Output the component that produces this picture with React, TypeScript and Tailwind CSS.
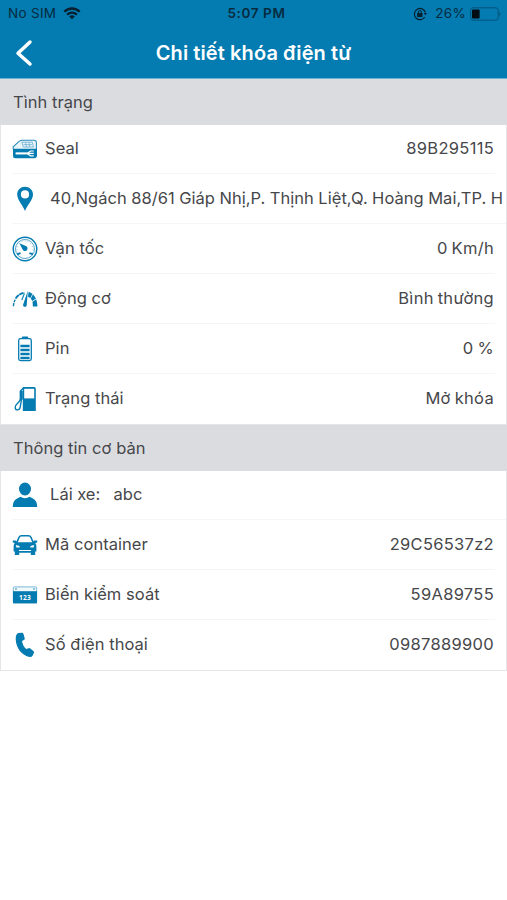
import type {ReactNode} from 'react';

type RowItem = {
    icon: ReactNode;
    label: string;
    value?: string;
    indent?: boolean;
};

const BLUE = '#047bb1';

function SealIcon() {
    return (
        <svg viewBox="0 0 26 26" className="w-[26px] h-[26px]" fill="none">
            <path d="M1.2 13.5V10.8L7.4 5.2Q8.6 4.2 10.2 4.2H22Q24.4 4.2 24.4 6.6V13.5" fill="#eaf5fa" stroke="#2c8dbe" strokeWidth="1.1"/>
            <path d="M9.8 6.2H20.3L21.5 11H11.3Z" stroke="#6fb3d5" strokeWidth=".9"/>
            <path d="M11.5 8.6H20M13.5 6.4L14.5 11M17 6.4L17.6 11" stroke="#6fb3d5" strokeWidth=".8"/>
            <path d="M1 12.8H25V19.2Q25 22.2 22 22.2H3.5Q1 22.2 1 19.7Z" fill={BLUE}/>
            <path d="M3.6 17.4H15.5" stroke="#fff" strokeWidth="2.1"/>
            <path d="M21.8 15H18.6L15 17.4L18.6 19.8H21.8M15 17.4H21.8" stroke="#fff" strokeWidth="1.2"/>
        </svg>
    );
}

function PinIcon() {
    return (
        <svg viewBox="0 0 26 26" className="w-[26px] h-[26px]">
            <path fillRule="evenodd" fill={BLUE}
                  d="M13 .8C8.6 .8 5.2 4 5.2 8.4C5.2 13.6 10.2 18 13 25C15.8 18 21 13.6 21 8.4C21 4 17.4 .8 13 .8ZM13 4.3A4.1 4.1 0 1 1 13 12.5A4.1 4.1 0 0 1 13 4.3Z"/>
        </svg>
    );
}

function SpeedIcon() {
    return (
        <svg viewBox="0 0 26 26" className="w-[26px] h-[26px]" fill="none">
            <circle cx="13" cy="13" r="11.8" stroke={BLUE} strokeWidth="1.4"/>
            <circle cx="13" cy="13" r="9.5" stroke="#3f97c3" strokeWidth=".9"/>
            <path d="M6 17A8 8 0 1 1 20 17" stroke="#9bcbe2" strokeWidth="1.1" strokeDasharray=".8 2.4"/>
            <path d="M5 18.3L8.6 17.2M21 18.3L17.4 17.2" stroke={BLUE} strokeWidth="1.8"/>
            <path d="M7.4 7.2L14.4 10.3A2.6 2.6 0 1 1 10.6 13.6Z" fill={BLUE}/>
        </svg>
    );
}

function EngineIcon() {
    return (
        <svg viewBox="0 0 26 26" className="w-[26px] h-[26px]" fill="none">
            <path d="M1.4 20.2C1.6 17.5 2.2 15.6 3.2 13.6" stroke={BLUE} strokeWidth="1.3" strokeDasharray="3 .8"/>
            <path d="M3.6 12.6C5.3 9.6 8 7.6 12.6 6.7" stroke={BLUE} strokeWidth="1.9" strokeDasharray="4.8 .6"/>
            <path d="M15.8 4.8L11 19A1.9 1.9 0 0 0 14.7 19.6Z" fill={BLUE}/>
            <path d="M12.4 7.6L9.8 14" stroke={BLUE} strokeWidth="1.1"/>
            <path d="M16.6 5.8L20.5 7.7L18.4 12L16 10.8Z" fill={BLUE}/>
            <path d="M21 8.2L24 12.6L20.3 15.1L18.8 12.6Z" fill={BLUE}/>
            <path d="M24.3 13.3Q25.4 17 25.4 20.6H20.9L20.5 15.8Z" fill={BLUE}/>
        </svg>
    );
}

function BatteryIcon() {
    return (
        <svg viewBox="0 0 26 26" className="w-[26px] h-[26px]" fill="none">
            <rect x="9.8" y=".6" width="6.4" height="2.2" rx=".8" fill={BLUE}/>
            <rect x="6.7" y="2.6" width="12.6" height="22" rx="1.8" stroke={BLUE} strokeWidth="1.3"/>
            <path d="M8.4 10H17.6M8.4 14H17.6M8.4 18H17.6M8.4 22H17.6" stroke={BLUE} strokeWidth="2.6"/>
        </svg>
    );
}

function FuelIcon() {
    return (
        <svg viewBox="0 0 26 26" className="w-[26px] h-[26px]" fill="none">
            <path d="M10.8 1H22Q23.8 1 23.8 2.8V25H10.8V1Z" fill={BLUE}/>
            <rect x="12.2" y="2.8" width="10" height="9.6" fill="#fff"/>
            <path d="M11 2.2L8.4 5V13C8.2 16.5 3.2 17.8 3.2 21.4C3.2 24.6 7.2 24.6 8 22L9.6 13" stroke={BLUE} strokeWidth="1.4"/>
            <path d="M7.9 4.8H10.8V13.5H7.9Z" fill={BLUE}/>
        </svg>
    );
}

function DriverIcon() {
    return (
        <svg viewBox="0 0 26 26" className="w-[26px] h-[26px]" fill={BLUE}>
            <ellipse cx="13" cy="7" rx="6" ry="6.4"/>
            <path d="M.8 25C.8 19 3.2 17.2 8.4 14.8C11.2 16.6 14.8 16.6 17.6 14.8C22.8 17.2 25.2 19 25.2 25Z"/>
        </svg>
    );
}

function CarIcon() {
    return (
        <svg viewBox="0 0 26 26" className="w-[26px] h-[26px]">
            <path d="M4.8 10.8L7 5.4Q7.6 3.8 9.6 3.8H16.4Q18.4 3.8 19 5.4L21.2 10.8" fill="#fff" stroke={BLUE} strokeWidth="1.5"/>
            <path d="M.8 8.4H4L5.2 10.2H20.8L22 8.4H25.2V10.4L23.2 11Q24.4 12.4 24.4 14.4V19.5H23.2V22.9H18.8V20.8H7.2V22.9H2.8V19.5H1.6V14.4Q1.6 12.4 2.8 11L.8 10.4Z" fill={BLUE}/>
            <path d="M3.8 13L7.6 14V15.6H4.4ZM22.2 13L18.4 14V15.6H21.6Z" fill="#fff"/>
            <path d="M7 18.5H19" stroke="#fff" strokeWidth="1"/>
        </svg>
    );
}

function PlateIcon() {
    return (
        <svg viewBox="0 0 26 26" className="w-[26px] h-[26px]">
            <rect x="1.3" y="4.9" width="23.4" height="16" rx="1" fill="#f1f8fb" stroke="#5aa6cc" strokeWidth=".8"/>
            <path d="M1 9.2H25V21.3H1Z" fill={BLUE}/>
            <circle cx="4" cy="6.9" r=".9" fill="#5aa6cc"/>
            <circle cx="22" cy="6.9" r=".9" fill="#5aa6cc"/>
            <text x="13" y="17.8" textAnchor="middle" fontSize="6.6" fontWeight="700" fill="#fff"
                  letterSpacing=".3" fontFamily="Open Sans, sans-serif">123</text>
        </svg>
    );
}

function PhoneIcon() {
    return (
        <svg viewBox="0 0 26 26" className="w-[26px] h-[26px]" fill={BLUE}>
            <path d="M6.4 1.1L9.9 .7Q11 .6 11.4 1.7L12.7 6.2Q13 7.3 12 7.9L10 8.9Q10.8 14 14.3 17L16.6 16.2Q17.5 15.8 18.3 16.5L21.6 19.2Q22.5 20 21.9 21.1L20.4 23.9Q19.5 25.2 17.7 24.9C9.7 23.5 4 16 3.7 7.2Q3.6 2 6.4 1.1Z"/>
        </svg>
    );
}

const STATUS: RowItem[] = [
    {icon: <SealIcon/>, label: 'Seal', value: '89B295115'},
    {icon: <PinIcon/>, label: '40,Ngách 88/61 Giáp Nhị,P. Thịnh Liệt,Q. Hoàng Mai,TP. H', indent: true},
    {icon: <SpeedIcon/>, label: 'Vận tốc', value: '0 Km/h'},
    {icon: <EngineIcon/>, label: 'Động cơ', value: 'Bình thường'},
    {icon: <BatteryIcon/>, label: 'Pin', value: '0 %'},
    {icon: <FuelIcon/>, label: 'Trạng thái', value: 'Mở khóa'},
];

const INFO: RowItem[] = [
    {icon: <DriverIcon/>, label: 'Lái xe:   abc', indent: true},
    {icon: <CarIcon/>, label: 'Mã container', value: '29C56537z2'},
    {icon: <PlateIcon/>, label: 'Biển kiểm soát', value: '59A89755'},
    {icon: <PhoneIcon/>, label: 'Số điện thoại', value: '0987889900'},
];

function Row({item, last}: { item: RowItem; last: boolean }) {
    return (
        <div className="flex h-[50px] shrink-0 pl-[11px]">
            <div className={`flex flex-1 min-w-0 items-center border-b ${last ? 'border-transparent' : 'border-[#f5f5f6]'} ${item.indent ? '' : 'mr-[11px]'}`}>
                <span className="shrink-0">{item.icon}</span>
                <span className={`whitespace-pre ${item.indent ? 'ml-3 [word-spacing:-0.3px]' : 'ml-[7px]'}`}>{item.label}</span>
                {item.value && (
                    <span className="ml-auto whitespace-nowrap pr-px tracking-[0.3px] [word-spacing:-1px]">{item.value}</span>
                )}
            </div>
        </div>
    );
}

function Section({title, items, listClass}: { title: string; items: RowItem[]; listClass: string }) {
    return (
        <section>
            <h2 className="flex h-[46px] items-center bg-[#dbdce0] pl-[13px]">{title}</h2>
            <div className={`flex flex-col justify-end overflow-hidden border-x border-b border-[#e6e6e9] ${listClass}`}>
                {items.map((item, i) => <Row key={item.label} item={item} last={i === items.length - 1}/>)}
            </div>
        </section>
    );
}

function StatusBar() {
    return (
        <div className="grid h-[27px] grid-cols-3 items-center px-2 text-[13.5px] tracking-[0.3px] text-[#062b40]">
            <div className="flex items-center gap-[7px]">
                <span>No SIM</span>
                <svg viewBox="0 0 18 13" className="h-[13px] w-[18px]" fill="none" stroke="#05202f" strokeWidth="2.3">
                    <path d="M1.3 4.8C5.7 .4 12.3 .4 16.7 4.8M4.1 7.8C6.9 5 11.1 5 13.9 7.8"/>
                    <path d="M9 12.2L6.2 9.4Q9 7.2 11.8 9.4Z" fill="#05202f" stroke="none"/>
                </svg>
            </div>
            <span className="pl-1.5 text-center font-semibold tracking-[0.6px]">5:07 PM</span>
            <div className="flex items-center justify-end">
                <svg viewBox="0 0 14 14" className="mr-2 h-[14px] w-[14px]" fill="none" stroke="#05202f">
                    <path d="M12.4 5.5A5.6 5.6 0 1 0 11.8 10" strokeWidth="1.2"/>
                    <path d="M10.7 6H14L12.4 8.2Z" fill="#05202f" stroke="none"/>
                    <path d="M5.3 6.5V5.1A1.5 1.5 0 0 1 8.3 5.1V6.5" strokeWidth="1"/>
                    <rect x="4.1" y="6.1" width="5.4" height="3.9" rx=".5" fill="#05202f" stroke="none"/>
                </svg>
                <span>26%</span>
                <svg viewBox="0 0 32 14" className="ml-1 -mr-[3px] h-[14px] w-[32px]">
                    <rect x=".6" y=".8" width="27.6" height="12.4" rx="2.5" fill="none" stroke="#07527a" strokeWidth="1"/>
                    <rect x="2" y="2.4" width="7.6" height="9.2" rx="1" fill="#020c12"/>
                    <path d="M29.4 4.8Q31.6 7 29.4 9.2Z" fill="#07527a"/>
                </svg>
            </div>
        </div>
    );
}

export default function App() {
    return (
        <main className="h-[900px] w-full overflow-hidden bg-white font-['Inter',sans-serif] text-[16.5px] tracking-[0.05px] text-[#46474a]">
            <header className="h-[79px] border-b border-[#6db3d3] bg-[#047bb1]">
                <StatusBar/>
                <div className="grid h-[51px] grid-cols-[50px_1fr_50px] items-center">
                    <svg viewBox="0 0 20 28" className="ml-[14px] h-7 w-5" fill="none" stroke="#fff" strokeWidth="3.5"
                         strokeLinecap="round" strokeLinejoin="round">
                        <path d="M16 3L4 14.3L16 25"/>
                    </svg>
                    <h1 className="text-center text-[20px] font-semibold tracking-[0.1px] text-white">Chi tiết khóa điện từ</h1>
                </div>
            </header>
            <Section title="Tình trạng" items={STATUS} listClass="h-[300px]"/>
            <Section title="Thông tin cơ bản" items={INFO} listClass="h-[200px]"/>
        </main>
    );
}
